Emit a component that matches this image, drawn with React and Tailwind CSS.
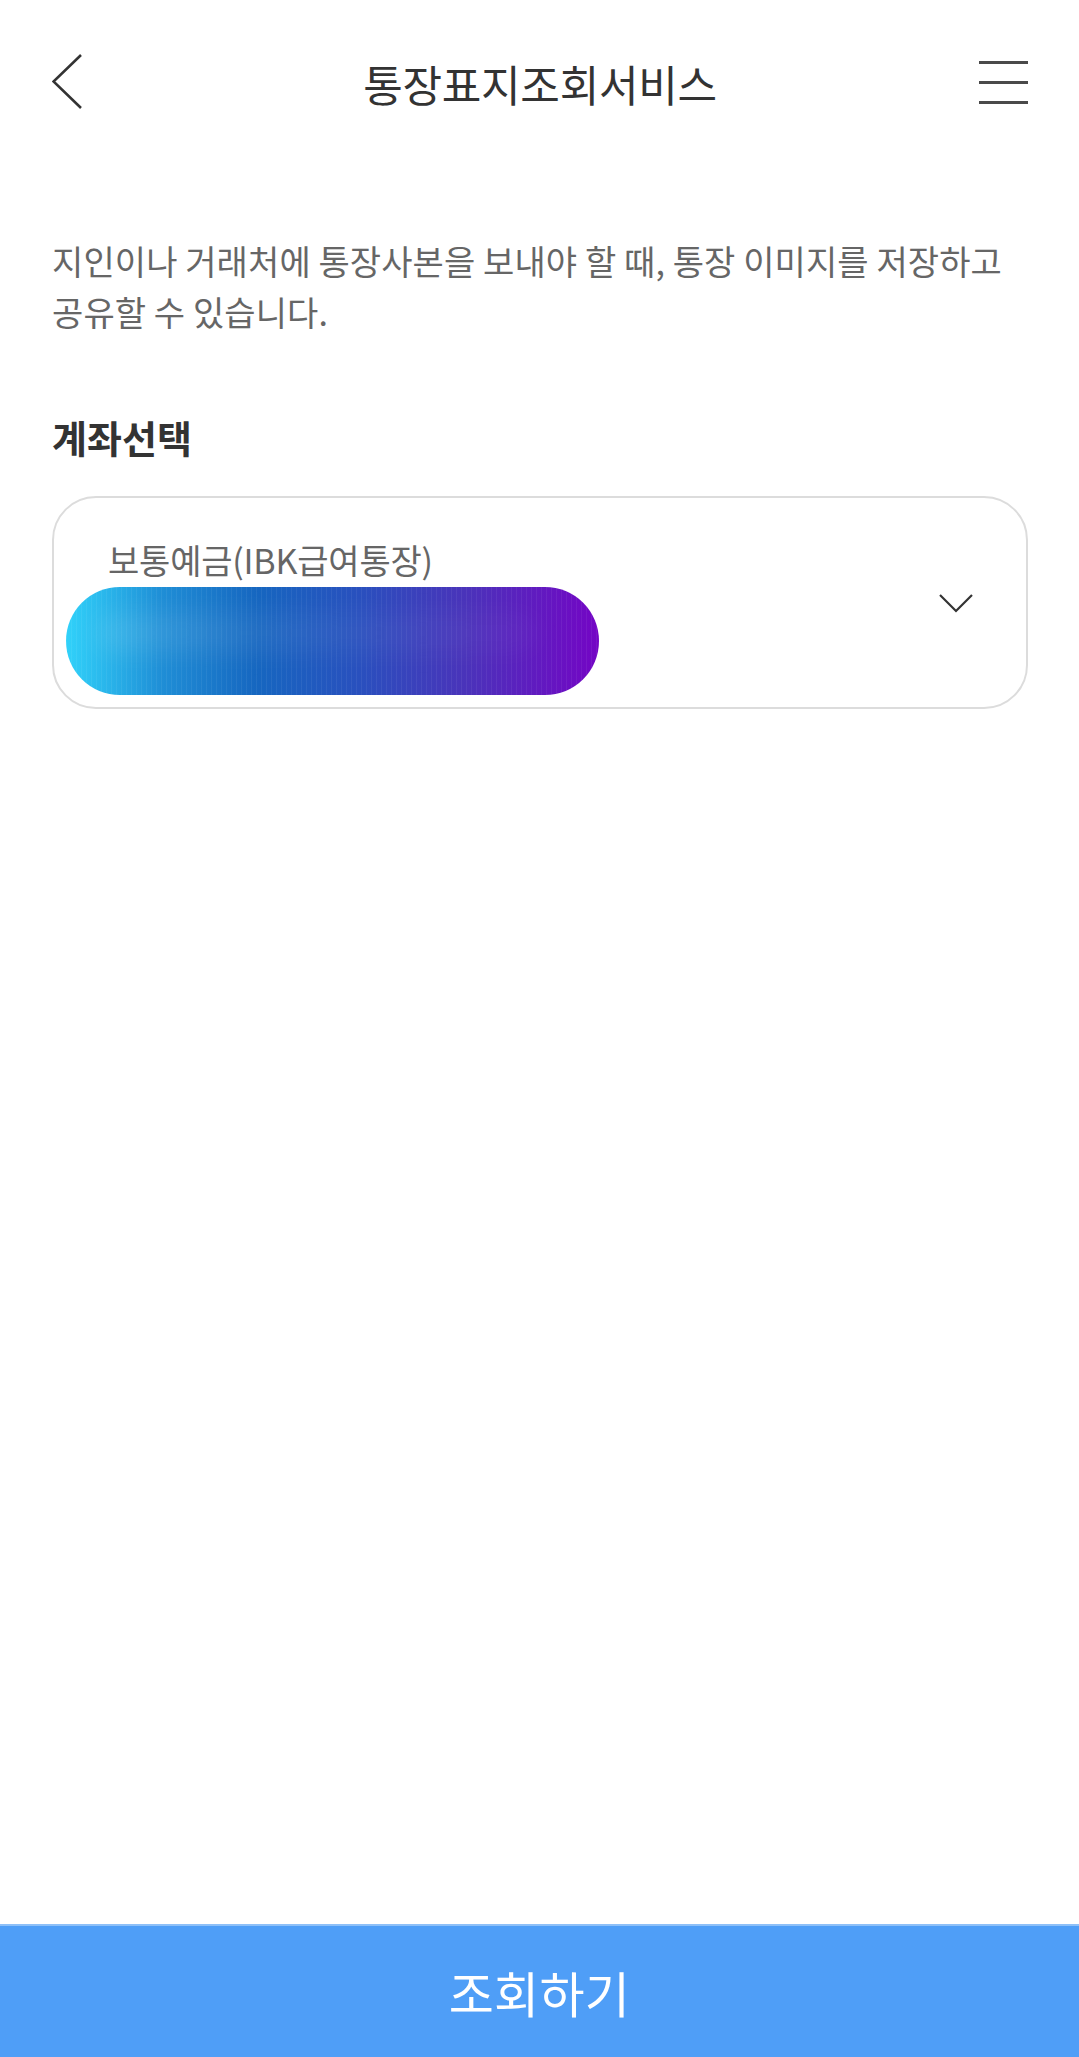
import React from "react";

export default function App() {
  return (
    <div className="w-[1079px] h-[2057px] bg-white flex flex-col font-['Noto_Sans_CJK_KR','Noto_Sans',sans-serif] overflow-hidden">
      {/* Header */}
      <div className="h-[164px] flex items-center justify-between pl-[52px] pr-[51px] shrink-0">
        <div className="w-[49px] flex items-center">
          <svg width="30" height="56" viewBox="0 0 30 56" className="text-[#333]">
            <polyline points="29,1 1.5,27.5 29,54" fill="none" stroke="currentColor" strokeWidth="2.6" />
          </svg>
        </div>
        <div className="text-[43px] tracking-[-0.3px] text-[#333] leading-none mt-[2px]">통장표지조회서비스</div>
        <div className="w-[49px] flex flex-col gap-[17px]">
          <div className="h-[3px] bg-[#4a4a4a]" />
          <div className="h-[3px] bg-[#4a4a4a]" />
          <div className="h-[3px] bg-[#4a4a4a]" />
        </div>
      </div>

      {/* Content */}
      <div className="flex flex-col pl-[52px] pr-[51px] flex-1">
        <p className="mt-[71px] text-[34px] leading-[51px] tracking-[0.1px] text-[#666] whitespace-nowrap">
          지인이나 거래처에 통장사본을 보내야 할 때, 통장 이미지를 저장하고
          <br />
          공유할 수 있습니다.
        </p>

        <div className="mt-[76px] text-[38px] leading-[48px] font-bold tracking-[0px] text-[#333]">계좌선택</div>

        <div className="mt-[35px] h-[213px] border-2 border-[#dcdcdc] rounded-[44px] flex items-center pr-[53px]">
          <div className="flex-1 flex flex-col pl-[12px] pt-[30px]">
            <div className="ml-[42px] text-[34px] leading-[40px] tracking-[-0.2px] text-[#666] whitespace-nowrap">보통예금(IBK급여통장)</div>
            <div className="mt-[7px] relative w-[533px] h-[108px] rounded-full overflow-hidden bg-[linear-gradient(90deg,#31d2fa_0%,#1f8ed6_18%,#1666c0_36%,#2950be_55%,#4a33ba_75%,#7405c5_100%)]">
              <div className="absolute left-[30px] right-[60px] top-[26px] h-[40px] rounded-full blur-[12px] bg-[linear-gradient(90deg,rgba(255,255,255,0.1),rgba(255,255,255,0.05)_50%,rgba(255,255,255,0.03))]" />
              <div className="absolute inset-0 bg-[repeating-linear-gradient(90deg,rgba(255,255,255,0.06)_0px,rgba(255,255,255,0.06)_1px,transparent_1px,transparent_5px)]" />
            </div>
          </div>
          <svg width="34" height="20" viewBox="0 0 34 20" className="text-[#333]">
            <polyline points="1,2 17,18 33,2" fill="none" stroke="currentColor" strokeWidth="2.2" />
          </svg>
        </div>
      </div>

      {/* Bottom button */}
      <div className="h-[133px] shrink-0 bg-[#4f9ef7] border-t-2 border-[#8ec0f8] flex items-center justify-center">
        <span className="text-[49px] tracking-[0.3px] text-white leading-none">조회하기</span>
      </div>
    </div>
  );
}
